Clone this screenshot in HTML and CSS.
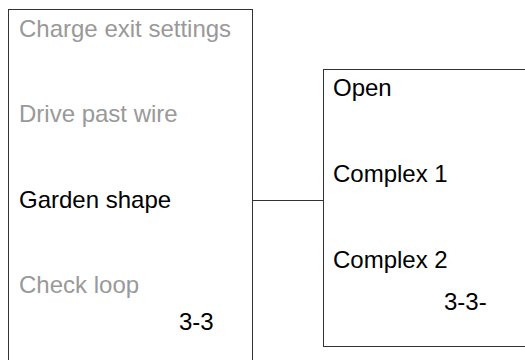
FILE: index.html
```html
<!DOCTYPE html>
<html>
<head>
<meta charset="utf-8">
<link rel="stylesheet" href="styles.css">
</head>
<body>
<div class="stage">
  <div class="panel panel-main">
    <div class="item muted">Charge exit settings</div>
    <div class="item muted">Drive past wire</div>
    <div class="item">Garden shape</div>
    <div class="item muted">Check loop</div>
    <div class="pager pager-main">3-3</div>
  </div>
  <div class="connector"></div>
  <div class="panel panel-sub">
    <div class="item">Open</div>
    <div class="item">Complex 1</div>
    <div class="item">Complex 2</div>
    <div class="pager pager-sub">3-3-</div>
  </div>
</div>
</body>
</html>
```
FILE: styles.css
```css
html, body {
  margin: 0;
  padding: 0;
  overflow: hidden;
  background: #fff;
  width: 525px;
  height: 360px;
}
body {
  font-family: "Liberation Sans", Arial, sans-serif;
  font-size: 24px;
  color: #000;
}
.stage {
  display: flex;
  align-items: flex-start;
  padding: 9px 0 0 8px;
}
.panel {
  flex: none;
  border: 1px solid #333;
  box-sizing: border-box;
  display: flex;
  flex-direction: column;
}
.panel-main {
  width: 245px;
  height: 351px;
  border-bottom: none;
  padding: 5px 0 0 10px;
}
.panel-sub {
  width: 202px;
  height: 278px;
  margin-top: 60px;
  border-right: none;
  padding: 4px 0 0 9px;
}
.item {
  height: 85.33px;
  line-height: 28px;
  flex: none;
  white-space: nowrap;
}
.panel-sub .item {
  height: 86px;
}
.muted {
  color: #999;
}
.pager {
  line-height: 28px;
}
.pager-main {
  padding-left: 160px;
  margin-top: -48px;
}
.pager-sub {
  padding-left: 111px;
  margin-top: -44px;
}
.connector {
  flex: none;
  width: 70px;
  height: 0;
  border-top: 1px solid #333;
  margin-top: 191px;
}
```
